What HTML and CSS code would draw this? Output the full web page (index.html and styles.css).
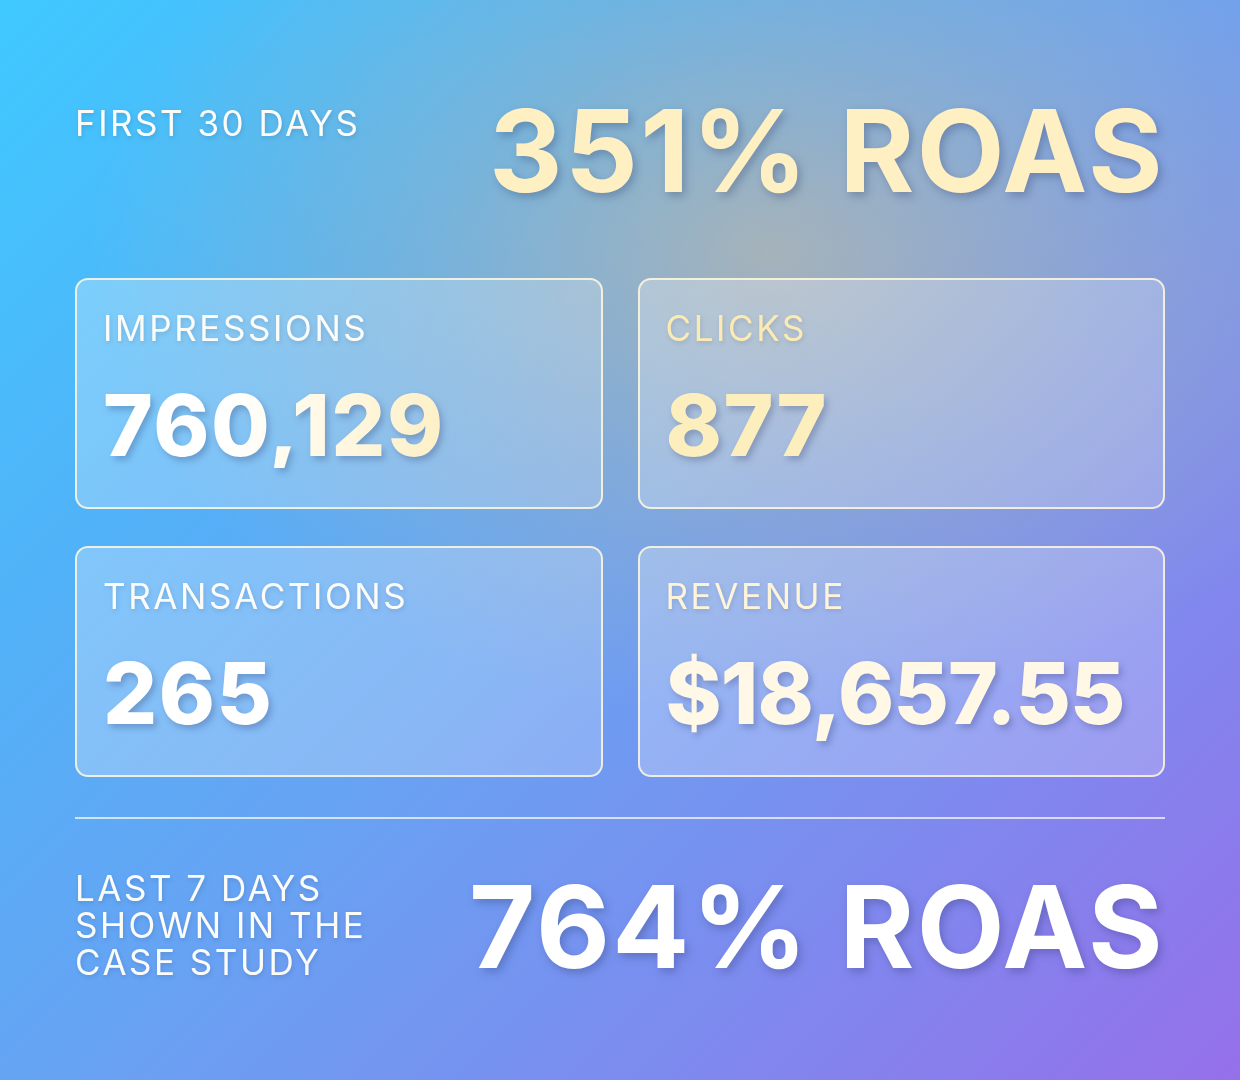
FILE: index.html
```html
<!DOCTYPE html>
<html lang="en">
<head>
<meta charset="utf-8">
<title>ROAS Case Study</title>
<link rel="stylesheet" href="styles.css">
</head>
<body>
<main class="page">
  <header class="top">
    <p class="label label-white">FIRST 30 DAYS</p>
    <h1 class="headline headline-cream">351% ROAS</h1>
  </header>

  <section class="cards">
    <article class="card">
      <p class="card-label label-white">IMPRESSIONS</p>
      <p class="card-value value-fade">760,129</p>
    </article>
    <article class="card">
      <p class="card-label label-cream">CLICKS</p>
      <p class="card-value value-cream">877</p>
    </article>
    <article class="card">
      <p class="card-label label-white">TRANSACTIONS</p>
      <p class="card-value value-white">265</p>
    </article>
    <article class="card">
      <p class="card-label label-light">REVENUE</p>
      <p class="card-value value-light tight">$18,657.55</p>
    </article>
  </section>

  <hr class="divider">

  <footer class="bottom">
    <div class="label label-white multi">
      <span class="line">LAST 7 DAYS</span>
      <span class="line">SHOWN IN THE</span>
      <span class="line">CASE STUDY</span>
    </div>
    <h2 class="headline headline-white">764% ROAS</h2>
  </footer>
</main>
</body>
</html>
```

FILE: styles.css
```css
html, body {
  margin: 0;
  padding: 0;
}

body {
  width: 1240px;
  height: 1080px;
  overflow: hidden;
  font-family: "Inter", "Noto Sans", sans-serif;
}

.page {
  box-sizing: border-box;
  width: 1240px;
  height: 1080px;
  padding: 94px 75px 0;
  background:
    radial-gradient(ellipse 680px 470px at 770px 250px, rgba(206, 186, 150, 0.62), rgba(206, 186, 150, 0.28) 50%, rgba(206, 186, 150, 0) 100%),
    linear-gradient(135deg, #3fc9ff 0%, #52b1f8 28%, #68a2f3 50%, #7b8def 72%, #9570ea 100%);
}

p, h1, h2 {
  margin: 0;
}

.top,
.bottom {
  display: flex;
  justify-content: space-between;
  align-items: flex-start;
}

.label {
  font-size: 35px;
  line-height: 40px;
  font-weight: 400;
  letter-spacing: 2.5px;
  margin-top: 9px;
  filter: drop-shadow(1px 2px 2px rgba(30, 50, 100, 0.18));
}

.label.multi {
  margin-top: 0;
}

.line {
  display: block;
  height: 37px;
  line-height: 37px;
  white-space: nowrap;
}

.headline {
  font-size: 114px;
  line-height: 114px;
  font-weight: 700;
  letter-spacing: 2.4px;
  filter: drop-shadow(3px 4px 4px rgba(30, 40, 90, 0.28));
}

.headline-cream { color: #fff0c3; }
.headline-white { color: #ffffff; }

.label-white { color: #fbfcf8; }
.label-cream { color: #fbebb3; }
.label-light { color: #fdf4d9; }

.cards {
  margin-top: 70px;
  display: grid;
  grid-template-columns: minmax(0, 1fr) minmax(0, 1fr);
  column-gap: 35px;
  row-gap: 37px;
}

.card {
  box-sizing: border-box;
  height: 231px;
  padding: 28px 26px 0;
  border: 2px solid rgba(255, 248, 222, 0.85);
  border-radius: 13px;
  background: linear-gradient(135deg, rgba(255, 255, 255, 0.28), rgba(255, 255, 255, 0.2));
}

.card-label {
  font-size: 35px;
  line-height: 40px;
  font-weight: 400;
  letter-spacing: 2.6px;
  filter: drop-shadow(1px 2px 2px rgba(30, 50, 100, 0.15));
}

.card-value {
  margin-top: 35px;
  font-size: 85px;
  line-height: 85px;
  font-weight: 800;
  letter-spacing: 1.5px;
  white-space: nowrap;
  filter: drop-shadow(3px 4px 3px rgba(30, 40, 90, 0.25));
}

.card-value.tight {
  letter-spacing: -0.8px;
}

.value-white { color: #ffffff; }
.value-cream { color: #fdefbd; }
.value-light { color: #fff8e6; }

.value-fade {
  display: inline-block;
  color: transparent;
  background: linear-gradient(90deg, #ffffff 0%, #ffffff 35%, #fdf0c6 100%);
  -webkit-background-clip: text;
  background-clip: text;
}

.divider {
  margin: 40px 0 0;
  height: 2px;
  border: 0;
  background: rgba(255, 255, 255, 0.7);
}

.bottom {
  margin-top: 51px;
}
```
